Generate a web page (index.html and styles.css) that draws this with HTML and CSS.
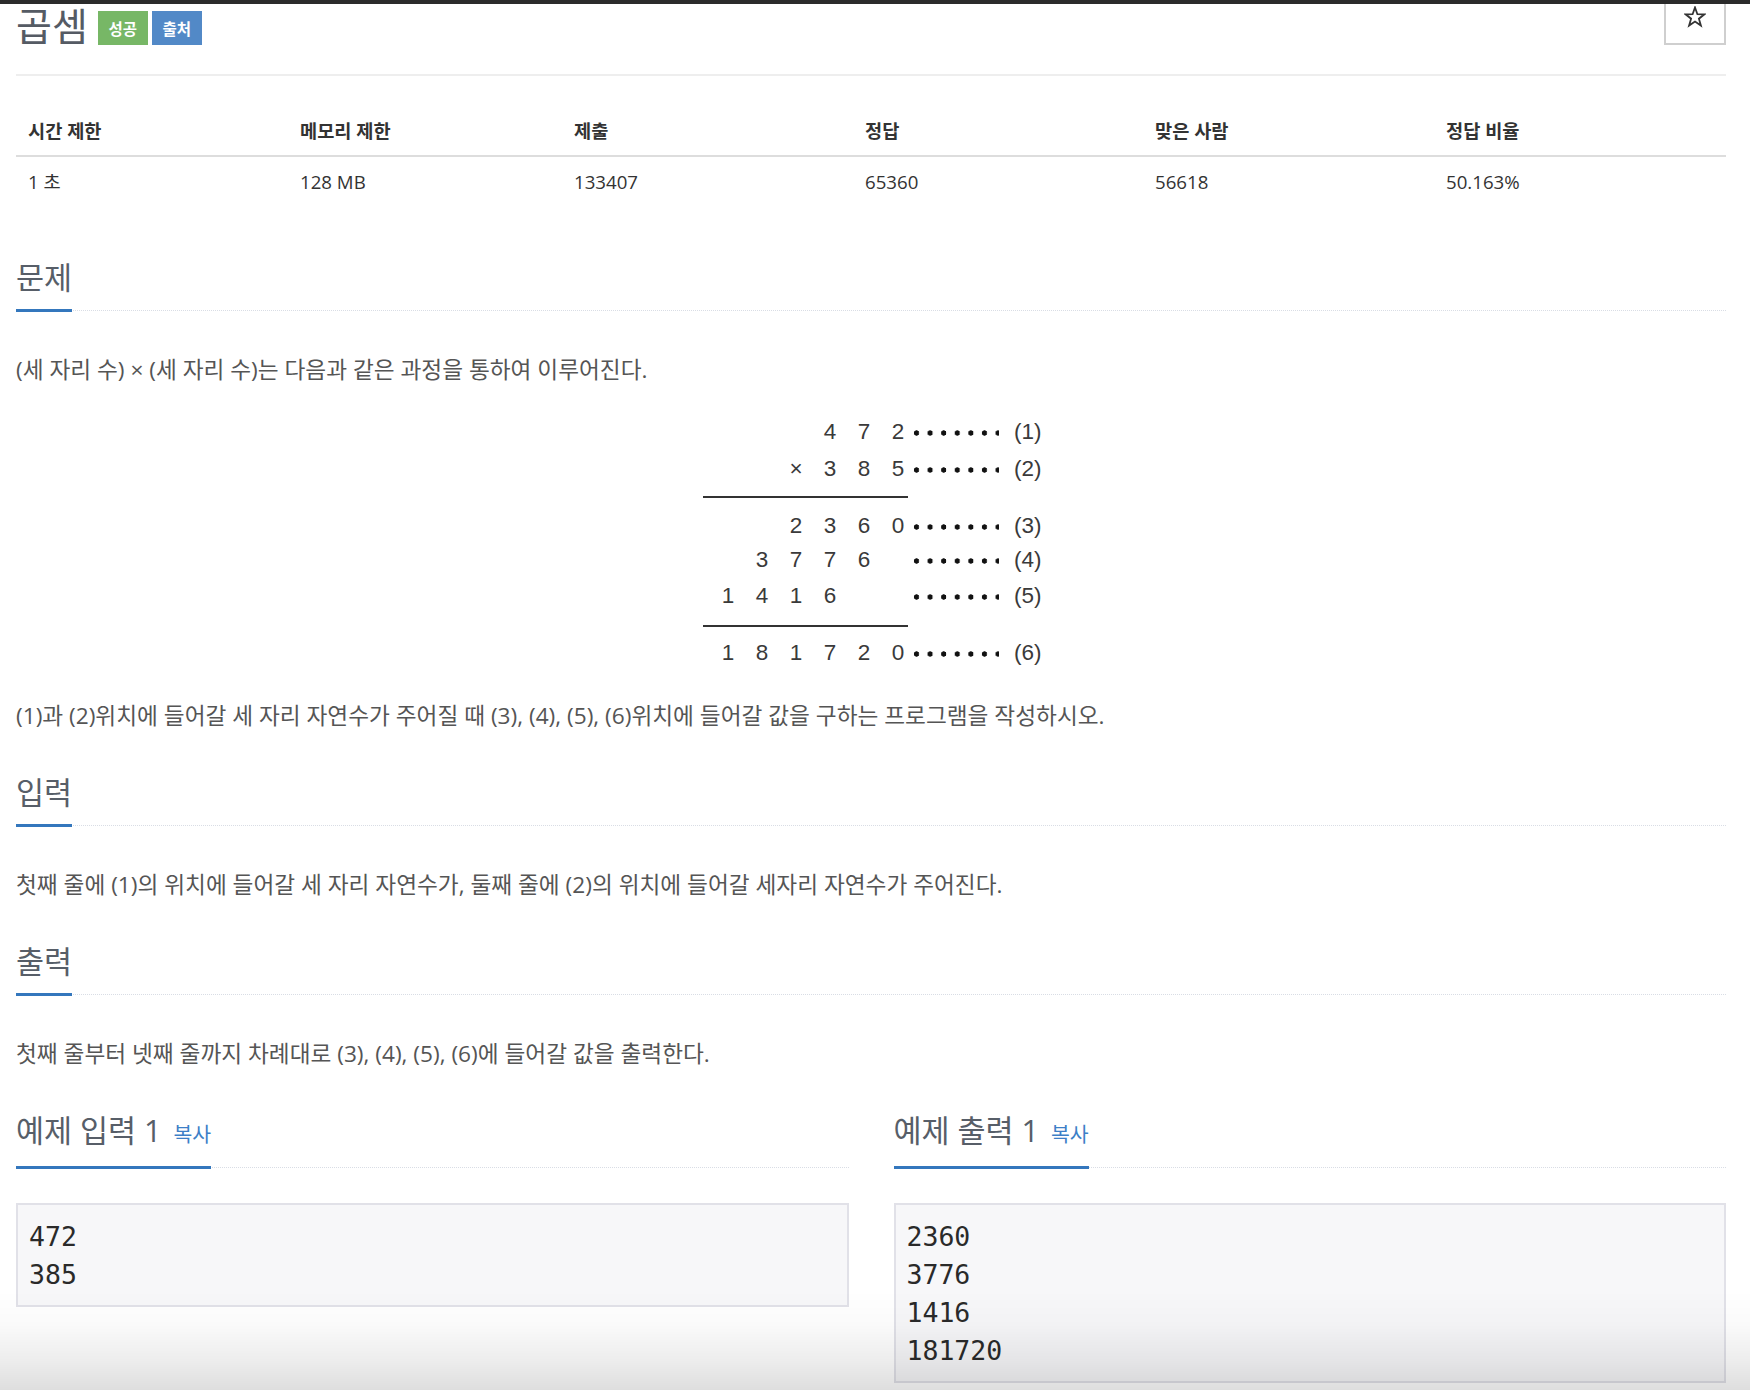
FILE: index.html
```html
<!DOCTYPE html>
<html lang="ko">
<head>
<meta charset="utf-8">
<title>곱셈</title>
<link rel="stylesheet" href="styles.css">
</head>
<body>
<div class="topbar"></div>
<div class="wrap">
  <div class="page-header">
    <h1 class="title">곱셈</h1>
    <span class="badge badge-green">성공</span>
    <span class="badge badge-blue">출처</span>
    <div class="spacer"></div>
    <div class="star-btn">
      <svg width="22" height="22" viewBox="0 0 22 22"><polygon points="11,1.5 13.4,8.2 20.5,8.3 14.9,12.7 16.9,19.6 11,15.5 5.1,19.6 7.1,12.7 1.5,8.3 8.6,8.2" fill="none" stroke="#333" stroke-width="1.8" stroke-linejoin="miter"/></svg>
    </div>
  </div>

  <table class="info">
    <thead>
      <tr><th class="w1">시간 제한</th><th class="w2">메모리 제한</th><th class="w3">제출</th><th class="w4">정답</th><th class="w5">맞은 사람</th><th class="w6">정답 비율</th></tr>
    </thead>
    <tbody>
      <tr><td>1 초</td><td>128 MB</td><td>133407</td><td>65360</td><td>56618</td><td>50.163%</td></tr>
    </tbody>
  </table>

  <section class="sec first">
    <h2 class="headline"><span>문제</span></h2>
    <div class="desc">
      <p class="lead">(세 자리 수) × (세 자리 수)는 다음과 같은 과정을 통하여 이루어진다.</p>
      <div class="calc">
        <div class="crow r1"><span class="d c4">4</span><span class="d c5">7</span><span class="d c6">2</span><span class="dots"></span><span class="lab">(1)</span></div>
        <div class="crow r2"><span class="d c3">×</span><span class="d c4">3</span><span class="d c5">8</span><span class="d c6">5</span><span class="dots"></span><span class="lab">(2)</span></div>
        <div class="rule rule1"></div>
        <div class="crow r3"><span class="d c3">2</span><span class="d c4">3</span><span class="d c5">6</span><span class="d c6">0</span><span class="dots"></span><span class="lab">(3)</span></div>
        <div class="crow r4"><span class="d c2">3</span><span class="d c3">7</span><span class="d c4">7</span><span class="d c5">6</span><span class="dots"></span><span class="lab">(4)</span></div>
        <div class="crow r5"><span class="d c1">1</span><span class="d c2">4</span><span class="d c3">1</span><span class="d c4">6</span><span class="dots"></span><span class="lab">(5)</span></div>
        <div class="rule rule2"></div>
        <div class="crow r6"><span class="d c1">1</span><span class="d c2">8</span><span class="d c3">1</span><span class="d c4">7</span><span class="d c5">2</span><span class="d c6">0</span><span class="dots"></span><span class="lab">(6)</span></div>
      </div>
      <p>(1)과 (2)위치에 들어갈 세 자리 자연수가 주어질 때 (3), (4), (5), (6)위치에 들어갈 값을 구하는 프로그램을 작성하시오.</p>
    </div>
  </section>

  <section class="sec">
    <h2 class="headline"><span>입력</span></h2>
    <div class="desc"><p>첫째 줄에 (1)의 위치에 들어갈 세 자리 자연수가, 둘째 줄에 (2)의 위치에 들어갈 세자리 자연수가 주어진다.</p></div>
  </section>

  <section class="sec">
    <h2 class="headline"><span>출력</span></h2>
    <div class="desc"><p>첫째 줄부터 넷째 줄까지 차례대로 (3), (4), (5), (6)에 들어갈 값을 출력한다.</p></div>
  </section>

  <div class="samples">
    <section class="sample">
      <h2 class="headline"><span>예제 입력 1 <a class="copy">복사</a></span></h2>
      <pre class="box">472
385</pre>
    </section>
    <section class="sample">
      <h2 class="headline"><span>예제 출력 1 <a class="copy">복사</a></span></h2>
      <pre class="box">2360
3776
1416
181720</pre>
    </section>
  </div>
</div>
<div class="fade"></div>
</body>
</html>
```

FILE: styles.css
```css
html, body {
  margin: 0;
  padding: 0;
  background: #fff;
}
body {
  font-family: "Open Sans", "Noto Sans CJK KR", sans-serif;
  color: #333;
  overflow: hidden;
  height: 1390px;
}
.topbar {
  position: fixed;
  top: 0;
  left: 0;
  right: 0;
  height: 4px;
  background: #2b2b2b;
  z-index: 5;
}
.wrap {
  padding: 0 24px 0 16px;
}

/* header */
.page-header {
  display: flex;
  align-items: flex-end;
  height: 60px;
  margin-top: -15px;
  padding-bottom: 29px;
  border-bottom: 2px solid #eee;
}
.title {
  margin: 0 10px 0 0;
  font-size: 39px;
  line-height: 39px;
  font-weight: 400;
  color: #555b64;
}
.badge {
  display: flex;
  align-items: center;
  justify-content: center;
  width: 50px;
  height: 34px;
  margin-right: 4px;
  color: #fff;
  font-size: 15.5px;
  font-weight: 700;
}
.badge-green { background: #77b766; }
.badge-blue { background: #5289c7; }
.spacer { flex: 1; }
.star-btn {
  box-sizing: border-box;
  width: 62px;
  height: 60px;
  border: 2px solid #cfcfcf;
  display: flex;
  align-items: center;
  justify-content: center;
  padding-top: 4px;
}
.star-btn svg { display: block; }

/* info table */
.info {
  width: 100%;
  margin-top: 30px;
  border-collapse: collapse;
  table-layout: fixed;
  font-size: 18.67px;
  color: #333;
}
.info th, .info td {
  text-align: left;
  padding: 8px 12px;
  line-height: 33px;
  white-space: nowrap;
}
.info th {
  font-weight: 700;
  border-bottom: 2px solid #ddd;
}
.info .w1 { width: 248px; }
.info .w2 { width: 250px; }
.info .w3 { width: 267px; }
.info .w4 { width: 266px; }
.info .w5 { width: 267px; }

/* sections */
.sec.first { margin-top: 51px; }
.headline {
  margin: 0 0 42px 0;
  font-size: 30.5px;
  line-height: 40px;
  font-weight: 400;
  color: #575e68;
  border-bottom: 1px dotted #d9dde5;
}
.headline > span {
  display: inline-block;
  padding-bottom: 12px;
  border-bottom: 3px solid #3477bd;
  margin-bottom: -2px;
}
.desc {
  font-size: 22.67px;
  line-height: 34px;
  color: #555;
}
.desc p {
  margin: 0 0 39px 0;
}
.desc p.lead {
  margin-bottom: 0;
}

/* calculation figure */
.calc {
  width: 336px;
  margin: 28px auto 29px auto;
  padding-left: 8px;
  box-sizing: border-box;
  font-family: "Liberation Sans", sans-serif;
  font-size: 22.5px;
  color: #3a3a3a;
}
.crow {
  display: grid;
  grid-template-columns: repeat(6, 34px) 84px auto;
  height: 34px;
  line-height: 34px;
  align-items: center;
}
.d { text-align: center; grid-row: 1; }
.c1 { grid-column: 1; }
.c2 { grid-column: 2; }
.c3 { grid-column: 3; }
.c4 { grid-column: 4; }
.c5 { grid-column: 5; }
.c6 { grid-column: 6; }
.dots {
  grid-column: 7;
  grid-row: 1;
  height: 6px;
  background-image: radial-gradient(circle at 3.5px 3px, #111 2.4px, transparent 2.9px);
  background-size: 13.6px 6px;
  background-repeat: repeat-x;
  margin-top: 2px;
  margin-left: -2px;
}
.lab {
  grid-column: 8;
  grid-row: 1;
  padding-left: 15px;
}
.r2 { margin-top: 3px; }
.rule {
  width: 205px;
  margin-left: -8px;
  height: 2px;
  background: #333;
}
.rule1 { margin-top: 10px; }
.r3 { margin-top: 11px; }
.r5 { margin-top: 2px; }
.rule2 { margin-top: 12px; }
.r6 { margin-top: 9px; }

/* samples */
.samples {
  display: grid;
  grid-template-columns: 1fr 1fr;
  column-gap: 45px;
  margin-top: 10px;
}
.sample .headline { margin-bottom: 35px; }
.copy {
  font-size: 20.5px;
  color: #3d7fc7;
  margin-left: 4px;
}
.box {
  margin: 0;
  border: 2px solid #e1e1e8;
  background: #f7f7f9;
  padding: 13px 13px 11px 11px;
  font-family: "DejaVu Sans Mono", monospace;
  font-size: 26.5px;
  line-height: 38px;
  color: #2a2a2a;
}

.fade {
  position: fixed;
  left: 0;
  right: 0;
  bottom: 0;
  height: 100px;
  pointer-events: none;
  background: linear-gradient(to bottom, rgba(0,0,0,0) 0%, rgba(0,0,0,0.02) 35%, rgba(0,0,0,0.07) 70%, rgba(0,0,0,0.13) 100%);
}
```
